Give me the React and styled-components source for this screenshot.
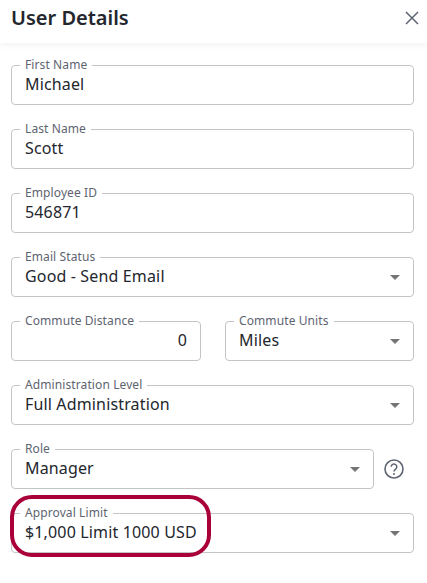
import React from "react";
import styled, { createGlobalStyle } from "styled-components";

const Global = createGlobalStyle`
  html, body { margin: 0; padding: 0; background: #fff; }
  body { font-family: "Noto Sans", "Open Sans", sans-serif; color: #23262d; }
`;
const Panel = styled.div`
  width: 427px; height: 583px; overflow: hidden; position: relative; background: #fff;
`;
const Header = styled.header`
  height: 43px; padding: 0 8px 8px 11px; display: flex; align-items: center; justify-content: space-between;
  background: #fff; box-shadow: 0 1px 8px rgba(0,0,0,.07); position: relative; box-sizing: border-box;
`;
const Title = styled.h1`
  margin: 0; font-size: 20px; line-height: 28px; font-weight: 600; color: #23262d;
`;
const CloseButton = styled.button`
  border: 0; background: none; padding: 0; width: 14px; height: 14px; display: flex; color: #5e6470;
`;
const Form = styled.div`
  padding: 22px 13px 0 11px; display: flex; flex-direction: column; gap: 24px;
`;
const Row = styled.div`
  display: flex; align-items: center; gap: ${p => p.$gap}px; padding-right: ${p => p.$pad || 0}px;
`;
const Field = styled.div`
  position: relative; box-sizing: border-box; height: 40px; flex: ${p => p.$width ? `0 0 ${p.$width}px` : "1 0 auto"};
  border: 1px solid #c4c4c4; border-radius: 4px; padding: 0 13px;
  display: flex; align-items: center; justify-content: ${p => p.$right ? "flex-end" : "space-between"};
`;
const Label = styled.label`
  position: absolute; left: 8px; top: -9px; padding: 0 5px; background: #fff;
  font-size: 12px; line-height: 16px; letter-spacing: 0.1px; color: #5e6470; white-space: nowrap;
`;
const Value = styled.span`
  font-size: 16px; line-height: 22px; letter-spacing: 0.15px; color: #23262d; white-space: nowrap; margin-top: -2px;
`;
const Caret = styled.span`
  width: 0; height: 0;
  border-left: 5px solid transparent; border-right: 5px solid transparent; border-top: 5px solid #757575;
`;
const HelpIcon = styled.svg`
  width: 20px; height: 20px; flex: none; color: #5e6470; display: block;
`;
const Callout = styled.div`
  position: absolute; left: 10px; top: 495px; width: 201px; height: 62px; box-sizing: border-box;
  border: 4px solid #a9003a; border-radius: 22px; pointer-events: none;
`;

const F = ({ label, value, select, right, width }) => (
  <Field $width={width} $right={right}>
    <Label>{label}</Label>
    <Value>{value}</Value>
    {select && <Caret />}
  </Field>
);

export default function App() {
  return (
    <Panel>
      <Global />
      <Header>
        <Title>User Details</Title>
        <CloseButton aria-label="Close">
          <svg width="14" height="14" viewBox="0 0 14 14" fill="none" stroke="currentColor" strokeWidth="1.5">
            <path d="M1 1l12 12M13 1L1 13" />
          </svg>
        </CloseButton>
      </Header>
      <Form>
        <F label="First Name" value="Michael" />
        <F label="Last Name" value="Scott" />
        <F label="Employee ID" value="546871" />
        <F label="Email Status" value="Good - Send Email" select />
        <Row $gap={24}>
          <F label="Commute Distance" value="0" right width={190} />
          <F label="Commute Units" value="Miles" select />
        </Row>
        <F label="Administration Level" value="Full Administration" select />
        <Row $gap={10} $pad={10}>
          <F label="Role" value="Manager" select />
          <HelpIcon viewBox="0 0 20 20" fill="none" aria-label="Help">
            <circle cx="10" cy="10" r="9" stroke="currentColor" strokeWidth="1.6" />
            <path d="M7.2 7.8a2.8 2.8 0 1 1 4.4 2.3c-1 .7-1.6 1.2-1.6 2.4" stroke="currentColor" strokeWidth="1.5" />
            <circle cx="10" cy="15" r="1" fill="currentColor" />
          </HelpIcon>
        </Row>
        <F label="Approval Limit" value="$1,000 Limit 1000 USD" select />
      </Form>
      <Callout />
    </Panel>
  );
}
